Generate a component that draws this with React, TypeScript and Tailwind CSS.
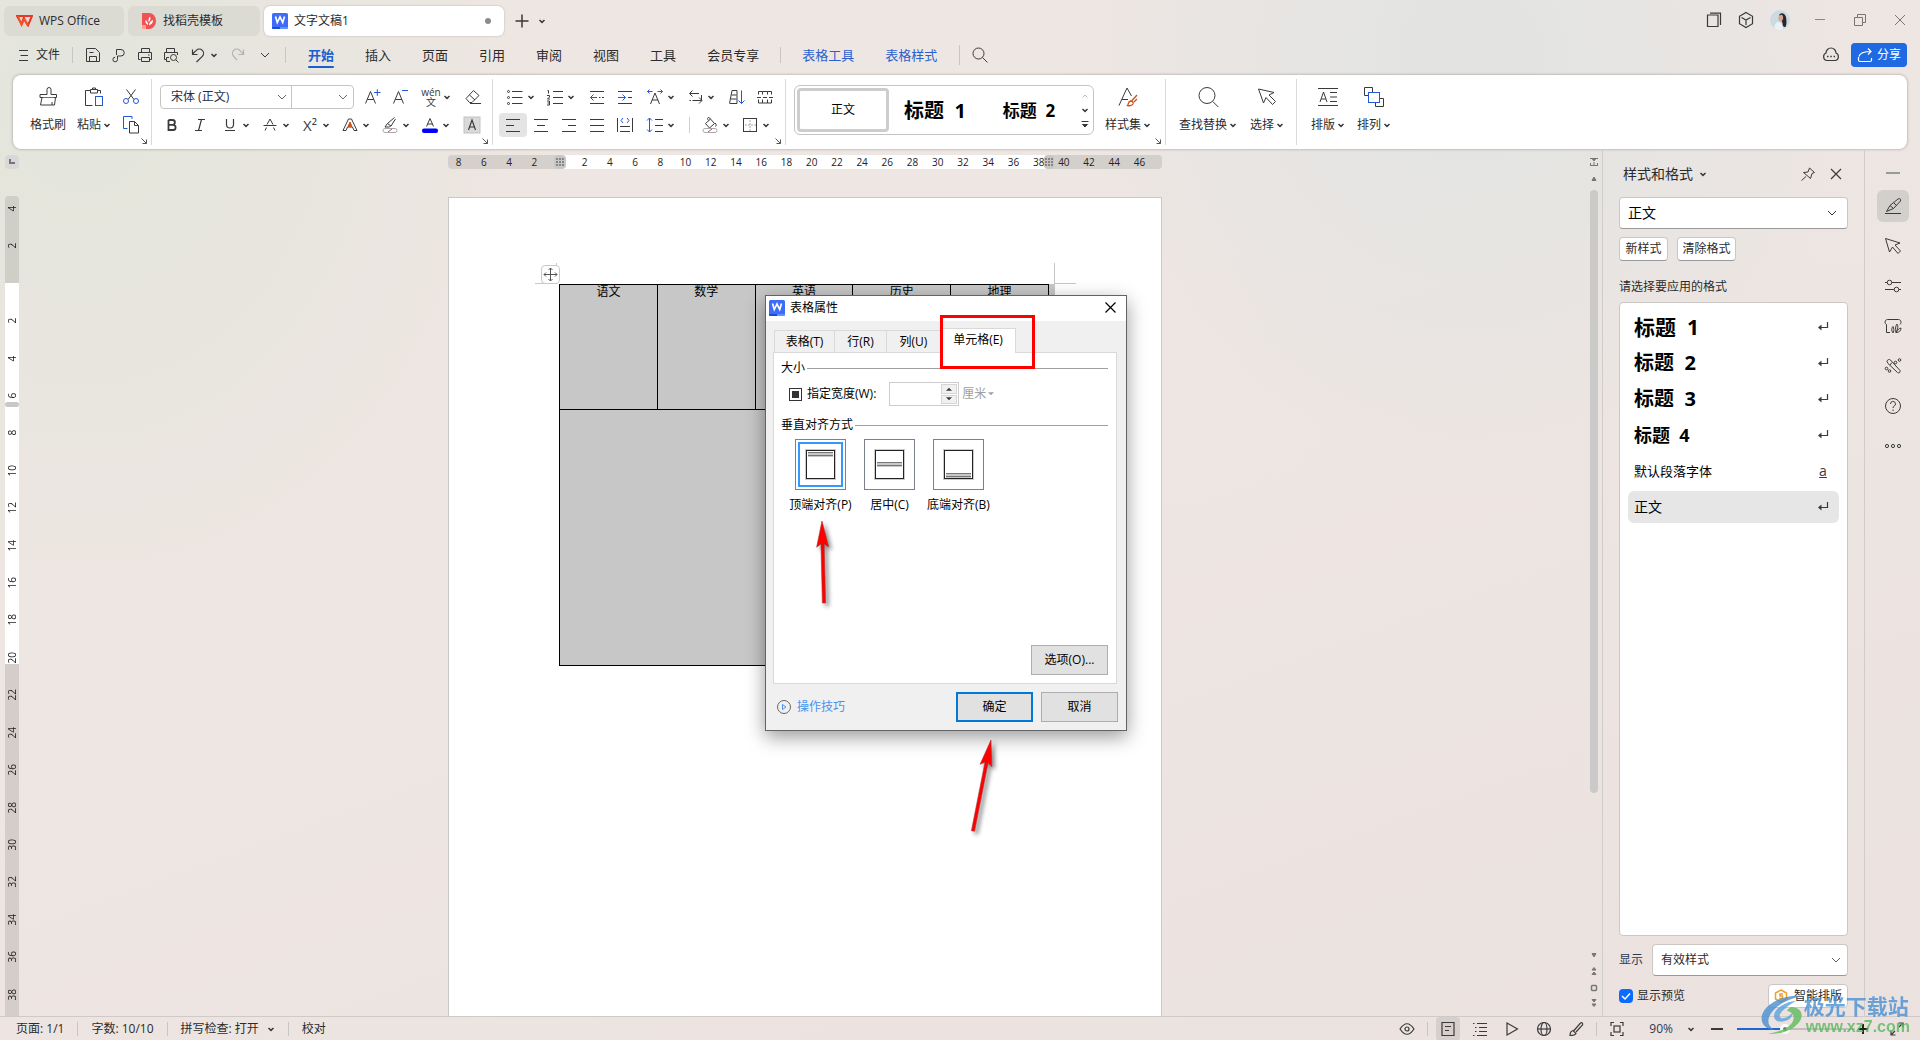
import { useState } from 'react'
import type { ReactNode } from 'react'

interface IconProps {
  w?: number
  h?: number
  sw?: number
  className?: string
  children: ReactNode
}

function Icon({ w = 20, h = 20, sw = 1, className = 'text-[#3a3a3a]', children }: IconProps) {
  return (
    <svg width={w} height={h} viewBox={`0 0 ${w} ${h}`} fill="none" stroke="currentColor" strokeWidth={sw} className={`shrink-0 ${className}`} aria-hidden="true">
      {children}
    </svg>
  )
}

const Chevron = ({ className = 'text-[#3a3a3a]' }: { className?: string }) => (
  <Icon w={8} h={8} sw={1.5} className={className}><path d="M1.5 3l2.5 2.4L6.5 3" /></Icon>
)

const BigChevron = ({ className = 'text-[#666]' }: { className?: string }) => (
  <Icon w={12} h={12} className={className}><path d="M2 4l4 4 4-4" /></Icon>
)

const BLUE = '#2457d6'
const ORANGE = '#c8541e'

const WordLogo = () => (
  <svg width="16" height="16" viewBox="0 0 16 16" className="shrink-0" aria-hidden="true">
    <rect width="16" height="16" rx="1.5" fill="#3d6bfa" />
    <path d="M0 14h8v2H1.5A1.5 1.5 0 0 1 0 14.500z" fill="#1a4bd6" />
    <path d="M8 14h8v.5a1.5 1.5 0 0 1-1.500 1.500H8z" fill="#5f93ff" />
    <path d="M3.5 3.5l1.800 6L8 4l2.700 5.500 1.800-6" fill="none" stroke="#fff" strokeWidth="1.7" />
  </svg>
)

/* ---------- icons ---------- */

const icons: Record<string, ReactNode> = {
  save: <Icon><path d="M3.5 3.5h9l4 4v9h-13zM6.500 16v-4.500h7V16M6.500 7.500h4" /></Icon>,
  exportPdf: <Icon><path d="M7.500 10V4.500h4.500a3 3 0 0 1 0 6.500H8.500v3.500a2.300 2.300 0 1 1-2.300-2.300" /></Icon>,
  print: <Icon><path d="M6.500 7V3.500h8V7M5.500 14.500h-2v-7h13v7h-2M6.500 12.500h8v4h-8zM13 10h1.500" /></Icon>,
  preview: <Icon><path d="M5.500 7V3.500h8V7M5.500 14.500h-2v-7h13V10M5.500 16.500h3.500M5.500 16.500v-4h2.500" /><circle cx="12.5" cy="12.5" r="3" /><path d="M14.800 14.800l2.700 2.700" /></Icon>,
  undo: <Icon sw={1.2}><path d="M4.500 4.500v5h5M4.500 9l3.800-3.600a4.200 4.200 0 0 1 6 6L8.500 17" /></Icon>,
  redo: <Icon sw={1.2} className="text-[#b5b1ae]"><path d="M15.500 4.500v5h-5M15.500 9l-3.800-3.600a4.200 4.200 0 0 0-6 6L9 15" /></Icon>,
  search: <Icon><circle cx="8.5" cy="8.5" r="5.5" /><path d="M12.500 12.500l5 5" /></Icon>,
  brush: <Icon><path d="M9 7.500V2.500a2 2 0 0 1 4 0v5h5.500v3H2v-3zM4 10.500L2.500 18h14l1-7.500M14 15v3" /><path d="M5 10.500h11" stroke={ORANGE} /></Icon>,
  paste: <Icon w={22}><path d="M7.500 3.500h-5v15h7M14.500 3.500h3v3M7.500 2.500h7v3.500h-7zM9.500 2.500v-1.500h3v1.500" /><rect x="12.5" y="9.5" width="7" height="9" stroke={BLUE} /></Icon>,
  cut: <Icon><path d="M5.500 2.500l7.500 10M14.500 2.500l-7.500 10" /><circle cx="5" cy="14" r="2.5" stroke={BLUE} /><circle cx="15" cy="14" r="2.5" stroke={BLUE} /></Icon>,
  copy: <Icon><path d="M6.500 13.500h-4v-12h8.500V4" stroke={BLUE} /><path d="M8.500 6.500h5l4 4v7.500h-9zM13.500 6.500v4h4" /></Icon>,
  grow: <Icon><path d="M2.500 16.500L7.500 4.500l5 12M4.300 12.500h6.500" /><path d="M11 5.500h6.500M14.300 2.300v6.500" stroke={BLUE} /></Icon>,
  shrink: <Icon><path d="M2.500 16.500L7.500 4.500l5 12M4.300 12.500h6.500" /><path d="M11 3.500h6" stroke={BLUE} /></Icon>,
  eraser: <Icon><path d="M3 11.500L10.500 3.500l5.500 5-7 7H6.500zM6.500 8l5.500 5M7 16.500h11" /></Icon>,
  bold: <Icon sw={1.8}><path d="M6.500 5v10h4.500a2.600 2.600 0 0 0 0-5.200H6.500M6.500 5H10.500a2.400 2.400 0 0 1 0 4.800" /></Icon>,
  italic: <Icon sw={1.2}><path d="M8 4.500h7M5 15.500h7M11.500 4.500l-3 11" /></Icon>,
  underline: <Icon sw={1.2}><path d="M6.500 4v5.500a3.500 3.500 0 0 0 7 0V4M5 15.500h10" /></Icon>,
  strike: <Icon><path d="M3.500 10.500h13M7 9.500l3-5.500 3 5.500M5 15.500l1.500-3M15 15.500l-1.500-3" /></Icon>,
  textFx: <Icon><path d="M3 15.500L8.500 4h3L17 15.500h-3L12.500 12h-5L6 15.500z" /><path d="M10 7l-2 4.500h4z" stroke={ORANGE} fill={ORANGE} /></Icon>,
  highlight: <Icon><path d="M15.500 4l-4.500 7-3.500-2.500 7-6M7.500 8.500L5 12h4.500L11 10.500" /><rect x="3" y="13.5" width="14" height="4" rx="2" stroke="#aaa" /><path d="M8 17l4-3" stroke="#e04444" /></Icon>,
  fontColor: <Icon><path d="M6.500 11.500L10 3.500l3.500 8M7.500 9h5" /><rect x="2" y="13.5" width="16" height="4.5" rx="2" fill="#0000fe" stroke="none" /></Icon>,
  shade: <Icon sw={1.2}><rect x="2" y="2" width="16" height="16" fill="#d9d9d9" stroke="#c4c4c4" strokeWidth="1" /><path d="M6.500 15L10 5l3.500 10M7.700 12h4.600" /></Icon>,
  bullets: <Icon><path d="M7 4.500h10.500M7 10.500h10.500M7 16.500h10.500" /><circle cx="3.5" cy="4.5" r="1" /><circle cx="3.5" cy="10.5" r="1" /><circle cx="3.5" cy="16.5" r="1" /></Icon>,
  numbers: <Icon><path d="M8 4.500h10M8 10.500h10M8 16.500h10M2.500 3.500h1v3M2 8.500h2.500v1.500L2.500 12H5M2 14h2.500v4H2M2.500 16H4.500" /></Icon>,
  outdent: <Icon><path d="M3 4.500h14M3 16.500h14M12 10.500h1.500M15 10.500h2" /><path d="M10 10.500H3.500M6.500 7.500l-3 3 3 3" stroke={BLUE} /></Icon>,
  indent: <Icon><path d="M3 4.500h14M3 16.500h14M13 10.500h4" /><path d="M3 10.500h7M7.500 7.500l3 3-3 3" stroke={BLUE} /></Icon>,
  charScale: <Icon><path d="M5.500 17l4.500-11 4.500 11M7 13h6" /><path d="M2.500 4.500h5M4.500 2.500l-2 2 2 2M12.500 4.500h5M15.500 2.500l2 2-2 2" stroke={BLUE} /></Icon>,
  wrap: <Icon><path d="M7.500 3.500l-3 3 3 3M5 6.500h9M16.500 8v5.500H7.500M14 10.500l3 3-3 3M4.500 13.500H6" /></Icon>,
  sort: <Icon><path d="M3 16.500h7M5 3.500h5v13M5 3.500l-2.500 13M4.500 8h5M4 12h5.500" /><path d="M14.500 3.500v13M11.500 13.500l3 3 3-3" stroke={BLUE} /></Icon>,
  grid: <Icon><path d="M3.500 7.500v-3h4v3M12.500 7.500v-3h4v3M3.500 12.500v3.500h4v-3.500M12.500 12.500v3.500h4v-3.500M7.500 4.500h5M7.500 16h5M2 10.500h4M8 10.500h4M14 10.500h4" /></Icon>,
  left: <Icon><path d="M3 4.500h14M3 10.500h8M3 16.500h14" /></Icon>,
  center: <Icon><path d="M3 4.500h14M6 10.500h8M3 16.500h14" /></Icon>,
  right: <Icon><path d="M3 4.500h14M9 10.500h8M3 16.500h14" /></Icon>,
  justify: <Icon><path d="M3 4.500h14M3 10.500h14M3 16.500h14" /></Icon>,
  distribute: <Icon><path d="M2.500 3v14M17.500 3v14M5 11.500h10M5 16.500h10" /><path d="M8 3l-2 2.500L8 8M12 3l2 2.500L12 8" stroke={BLUE} /></Icon>,
  spacing: <Icon><path d="M10 4.500h8M10 10.500h8M10 16.500h8" /><path d="M4.500 3v14M2 5.500l2.500-2.500L7 5.500M2 14.500L4.500 17 7 14.500" stroke={BLUE} /></Icon>,
  bucket: <Icon><path d="M5.500 8.500L10.500 4l4 4.500-5 4.500zM10.500 4c-2-3-4-1-2 1.500M15 8c1.500 1.500 1.500 3 .5 3.500" /><rect x="3" y="13.5" width="14" height="4" rx="2" stroke="#aaa" /><path d="M8 17l4-3" stroke="#e04444" /></Icon>,
  border: <Icon><rect x="3.5" y="3.5" width="13" height="13" /><path d="M10 5v11M5 10h11" stroke="#aaa" strokeDasharray="2 1" /></Icon>,
  styleSet: <Icon w={22} h={22}><path d="M2 19.500L10 2l4.500 8M5 13.500h6" /><path d="M20 9l-5 5.500M20 13l-3 3M10.500 19.500c1-1 .5-4 3-4.500 2.500 0 3 2 2.500 3-1 1.500-3.500 2-5.500 1.500z" stroke={ORANGE} strokeWidth="1.3" /></Icon>,
  find: <Icon w={24} h={24}><circle cx="11" cy="10.5" r="8" /><path d="M16.800 16.500l5.500 5.500" /></Icon>,
  pointer: <Icon w={22} h={22}><path d="M2.500 3l5 14 2.500-5.500 6.500 7 3-3-6.500-6.500 5-2.500z" /></Icon>,
  layout: <Icon w={22}><path d="M1 1.500h20M1 18.500h20M3 15L6.500 5l3.500 10M4.200 12h4.600M13 5.500h7M13 10h7M13 14.500h7" /></Icon>,
  arrange: <Icon w={22} h={22}><path d="M6 9.500H1.500v-8h8V6M16 12.500h4.500v8h-8V17" /><rect x="5.5" y="6.5" width="11" height="10" stroke={BLUE} /></Icon>,
  edit: <Icon><path d="M3.500 15.500l3.500-6 8-6.500c2-1 3 0 2.500 2L10.500 12.500zM7 9.500l3.500 3M10.500 6.500l3 3M2 17.500h16" /></Icon>,
  railPointer: <Icon><path d="M2.500 2.500l4 13.500 3-5 5.500 6.500 2.500-2.500-5.500-6 5-2z" /></Icon>,
  sliders: <Icon><circle cx="6.5" cy="6.5" r="2.3" /><circle cx="13.5" cy="13.5" r="2.3" /><path d="M2 6.500h2.200M8.800 6.500H18M2 13.500h9.200M15.800 13.500H18" /></Icon>,
  gallery: <Icon><path d="M7 16.500H3.500V8.500C1.500 8 1.500 3.500 4.500 3.500h11c3 0 3 4 1.500 5M9.500 16.500c-1.500-3-.5-5 .5-6 1 2 1 4 .5 6zM13 16.500c-1-5 0-7 1-8.500 1.500 2 1 5-1 8.500zM13 16.500c2-3 3-4 5-4.500 0 2.500-1.500 4.500-5 4.500z" /></Icon>,
  tools: <Icon><path d="M4 5.500c0-2 2.500-2.500 3.500-1.500l9.500 10.500c.5 2-1 3-2.500 2L5 7.500zM7 9l2-2.500" /><circle cx="12.5" cy="6.5" r="1.3" /><circle cx="16.5" cy="4" r="1.3" /><circle cx="3.5" cy="12.5" r="1.3" /><circle cx="6.500" cy="15" r="1.3" /></Icon>,
  help: <Icon><circle cx="10" cy="10" r="7.5" /><path d="M7.500 8a2.500 2.500 0 1 1 3.500 2.200c-.7.400-1 .8-1 1.800M10 13.500v1.500" /></Icon>,
  more: <Icon><circle cx="4" cy="10" r="1.6" /><circle cx="10" cy="10" r="1.6" /><circle cx="16" cy="10" r="1.6" /></Icon>,
  eye: <Icon sw={1.2}><path d="M3 10q7-10.500 14 0q-7 10.500-14 0z" /><circle cx="10" cy="10" r="2" /></Icon>,
  pageView: <Icon sw={1.2}><path d="M4 3.500h12v13H4zM7 7.500h6M7 11.500h4" /></Icon>,
  outline: <Icon sw={1.2}><path d="M3 4.500h1.500M7 4.500h10M5 8.500h1.500M9 8.500h8M5 12.500h1.500M9 12.500h8M3 16.500h1.500M7 16.500h10" /></Icon>,
  play: <Icon sw={1.2}><path d="M5 4v12l10.500-6z" /></Icon>,
  globe: <Icon sw={1.2}><circle cx="10" cy="10" r="6.5" /><ellipse cx="10" cy="10" rx="3" ry="6.5" /><path d="M3.500 10h13" /></Icon>,
  pen: <Icon sw={1.2}><path d="M4 16.500c0-3 1-4.500 3-5l3 3c-1 1.800-3 2-6 2zM8 11.500l6.500-7.500c1.500-.8 2.800.5 2 2L10 13" /></Icon>,
  fit: <Icon sw={1.2}><path d="M7 3.500H4V7M13 3.500h3V7M7 16.500H4V13M13 16.500h3V13" /><rect x="7" y="7" width="6" height="6" /></Icon>,
  full: <Icon sw={1.2}><path d="M11.500 4H16v4.500M8.500 16H4v-4.500M16 4l-4 4M4 16l4-4" /></Icon>,
}

/* ---------- small building blocks ---------- */

function Tool({ name, active }: { name: string; active?: boolean }) {
  return (
    <button aria-label={name} className={`flex h-6 w-7 items-center justify-center rounded ${active ? 'bg-[#e4e4e4]' : ''}`}>
      {icons[name]}
    </button>
  )
}

function SplitTool({ label, children }: { label: string; children: ReactNode }) {
  return (
    <button aria-label={label} className="flex h-6 w-10 items-center pr-2">
      <span className="flex w-6 justify-center">{children}</span>
      <Chevron />
    </button>
  )
}

function BigTool({ name, label, arrow, className }: { name: string; label: string; arrow?: boolean; className: string }) {
  return (
    <button className={`flex flex-col items-center ${className}`}>
      <span className="flex h-7 items-center">{icons[name]}</span>
      <span className="flex h-7 items-center gap-0.5 whitespace-nowrap">{label}{arrow && <Chevron />}</span>
    </button>
  )
}

const Launcher = () => (
  <button aria-label="更多设置" className="absolute right-[3px] bottom-0">
    <Icon w={8} h={8} className="text-[#555]"><path d="M1.500 1.500l5 5M2.500 6.500h4v-4" /></Icon>
  </button>
)

const Rule = ({ className }: { className: string }) => <span className={`w-px shrink-0 ${className}`} />

/* ---------- top bars ---------- */

function TitleBar() {
  return (
    <header className="flex h-9 shrink-0 items-end pl-1">
      <button className="flex h-[30px] w-[120px] items-center gap-1.5 rounded-md bg-[#dbdad3] pl-3">
        <svg width="17" height="12" viewBox="0 0 17 12" aria-hidden="true">
          <path d="M1 1h7.500L5.500 9zM8.500 1H16l-4 9.500L8 4" fill="none" stroke="#e8362b" strokeWidth="2" />
          <path d="M2 1l3.500 9 3-6 3.500 6.500" fill="none" stroke="#f5531f" strokeWidth="1.8" />
        </svg>
        WPS Office
      </button>
      <button className="ml-1 flex h-[30px] w-[132px] items-center gap-[7px] rounded-md bg-[#dbdad3] pl-3.5">
        <svg width="14" height="16" viewBox="0 0 14 16" aria-hidden="true">
          <path d="M0 0h7a7 8 0 0 1 0 16H0z" fill="#ee5253" />
          <path d="M0 12h4v4H0z" fill="#ff9a8f" />
          <path d="M6 12c-2-1-3-3-2.500-5C5.500 8 6.200 10 6 12zM6.500 9C6 6.500 7 4.500 8 3.500c1 2 .5 4-1.500 5.500zM7 12c0-2.500 2-4.500 4-5 .2 2.500-1.500 5-4 5z" fill="#fff" />
        </svg>
        找稻壳模板
      </button>
      <div className="ml-1 flex h-[30px] w-60 items-center gap-1.5 rounded-md bg-white pl-2 shadow-[0_0_2px_rgba(0,0,0,0.25)]">
        <WordLogo />
        <span className="flex-1">文字文稿1</span>
        <span className="mr-[13px] size-1.5 rounded-full bg-[#8c8c8c]" />
      </div>
      <button aria-label="新建" className="ml-2 flex h-[30px] w-5 items-center justify-center">
        <Icon w={16} h={16} sw={1.5}><path d="M1.500 8h13M8 1.500v13" /></Icon>
      </button>
      <button aria-label="标签列表" className="ml-1.5 flex h-[30px] items-center"><Chevron /></button>

      <div className="ml-auto flex h-9 items-center pb-1 pt-2">
        <button aria-label="窗口" className="flex w-8 justify-center"><Icon sw={1.2}><path d="M3.500 5h10.500v11.500H3.500zM6 3.200h10.500V15" /></Icon></button>
        <button aria-label="应用" className="flex w-8 justify-center"><Icon sw={1.2}><path d="M10 2.500l6.500 3.800v7.400L10 17.500l-6.500-3.800V6.300zM5.500 7.500L10 10l4.500-2.500M10 10v5" /></Icon></button>
        <button aria-label="账号" className="flex w-9 justify-center">
          <svg width="20" height="20" viewBox="0 0 20 20" aria-hidden="true">
            <circle cx="10" cy="10" r="10" fill="#ccdbe2" />
            <path d="M9 5c2-3 6-2 7 2 .5 3 1 7-.5 10-2 .5-3-1-3-4z" fill="#2c2530" />
            <path d="M8.500 7c1-2.500 4-3 4.500-.5.500 2.500-.5 4.500-2 5-1.800.3-3-2-2.500-4.500z" fill="#d9a58f" />
            <path d="M4.500 18c0-4 1.500-5.500 4-6 2.500.5 4 3 4.500 7.500-3 1-6 .5-8.500-1.500z" fill="#eaf2f5" />
          </svg>
        </button>
        <button aria-label="最小化" className="ml-0.5 flex w-10 justify-center"><Icon w={12} h={12} className="text-[#888]"><path d="M1 5.500h10" /></Icon></button>
        <button aria-label="还原" className="flex w-10 justify-center"><Icon w={14} h={14} className="text-[#777]"><path d="M1.500 4.500h8v8h-8zM4.500 4.500v-3h8v8h-3" /></Icon></button>
        <button aria-label="关闭" className="flex w-10 justify-center"><Icon w={12} h={12} className="text-[#777]"><path d="M1 1l10 10M11 1L1 11" /></Icon></button>
      </div>
    </header>
  )
}

const tabs = ['开始', '插入', '页面', '引用', '审阅', '视图', '工具', '会员专享']

function MenuBar() {
  return (
    <nav className="flex h-[39px] shrink-0 items-center pb-0.5 pl-[19px] pr-[13px]">
      <button className="flex items-center gap-2">
        <Icon w={9} h={12}><path d="M0 1.500h9M1.500 6.500h7.500M0 11.500h9" /></Icon>
        文件
      </button>
      <Rule className="ml-3 mr-[7px] h-4 bg-[#c9c5c2]" />
      {['save', 'exportPdf', 'print', 'preview'].map((n) => (
        <button key={n} aria-label={n} className="flex w-[26px] justify-center">{icons[n]}</button>
      ))}
      <button aria-label="撤销" className="flex w-[41px] items-center gap-0.5 pl-1">{icons.undo}<Chevron /></button>
      <button aria-label="恢复" className="flex w-[26px] justify-center">{icons.redo}</button>
      <button aria-label="更多" className="flex w-7 justify-center"><BigChevron className="text-[#3a3a3a]" /></button>
      <Rule className="ml-1.5 h-4 bg-[#c9c5c2]" />
      <div className="ml-[22px] flex items-center gap-[31px] text-[13px]">
        {tabs.map((t, i) => (
          <a key={t} href="#" className={i === 0 ? 'relative font-bold text-[#1a5fd0]' : ''}>
            {t}
            {i === 0 && <span className="absolute inset-x-0 -bottom-1 h-0.5 rounded bg-[#1a5fd0]" />}
          </a>
        ))}
      </div>
      <Rule className="mx-[21px] h-4 bg-[#c9c5c2]" />
      <div className="flex gap-[31px] text-[13px] text-[#2a5fcd]">
        <a href="#">表格工具</a>
        <a href="#">表格样式</a>
      </div>
      <Rule className="ml-[22px] mr-2.5 h-5 bg-[#c9c5c2]" />
      <button aria-label="搜索">{icons.search}</button>
      <button aria-label="云" className="ml-auto mr-2.5">
        <Icon sw={1.2}><path d="M5.500 15.500a4 4 0 0 1-.5-7.500 5 5 0 0 1 10 0 4 4 0 0 1-.5 7.500z" /><path d="M6 11.500h1.500M9.300 11.500h1.500M12.600 11.500h1.500" strokeWidth="1.6" /></Icon>
      </button>
      <button className="flex h-6 w-14 items-center justify-center gap-1 rounded bg-[#1f6ae3] text-white">
        <Icon w={16} h={16} sw={1.2} className="text-white"><path d="M1.500 10v3a1.500 1.500 0 0 0 1.500 1.500h10a1.500 1.500 0 0 0 1.500-1.500v-2M2 9.500c1-4 5-5 12-5M11 1.500l3 3-3 3" /></Icon>
        分享
      </button>
    </nav>
  )
}

function Ribbon() {
  return (
    <section className="mx-[13px] flex h-[74px] shrink-0 rounded-lg bg-white py-1 shadow-[0_0_3px_rgba(0,0,0,0.35)]">
      <div className="relative flex w-[138px] pl-[13px] pt-1">
        <BigTool name="brush" label="格式刷" className="w-11" />
        <BigTool name="paste" label="粘贴" arrow className="ml-1 w-10" />
        <div className="ml-[3px] flex flex-col gap-1 pt-0.5"><Tool name="cut" /><Tool name="copy" /></div>
        <Launcher />
      </div>
      <Rule className="bg-[#d9d9d9]" />

      <div className="relative w-[340px] pt-1">
        <div className="flex h-7 items-center pl-2">
          <div className="relative flex h-6 w-[194px] items-center rounded border border-[#c4c4c4]">
            <select aria-label="字体" className="h-full w-[131px] appearance-none border-r border-[#c4c4c4] pl-2.5 text-[#22304a]"><option>宋体 (正文)</option></select>
            <select aria-label="字号" className="h-full flex-1 appearance-none"><option></option></select>
            <span className="pointer-events-none absolute left-[115px]"><BigChevron /></span>
            <span className="pointer-events-none absolute right-1"><BigChevron /></span>
          </div>
          <div className="ml-[5px] flex"><Tool name="grow" /><Tool name="shrink" /></div>
          <div className="ml-1 flex">
            <SplitTool label="拼音指南"><span className="flex flex-col items-center text-[10px]/[10px] text-[#3a3a3a]"><span>wén</span><span>文</span></span></SplitTool>
            <Tool name="eraser" />
          </div>
        </div>
        <div className="flex h-7 items-center pl-1.5">
          <Tool name="bold" />
          <Tool name="italic" />
          <div className="ml-1 flex">
            <SplitTool label="下划线">{icons.underline}</SplitTool>
            <SplitTool label="删除线">{icons.strike}</SplitTool>
            <SplitTool label="上标"><span className="text-[15px]/[20px] text-[#3a3a3a]">X²</span></SplitTool>
            <SplitTool label="文字效果">{icons.textFx}</SplitTool>
            <SplitTool label="突出显示">{icons.highlight}</SplitTool>
            <SplitTool label="字体颜色">{icons.fontColor}</SplitTool>
            <Tool name="shade" />
          </div>
        </div>
        <Launcher />
      </div>
      <Rule className="bg-[#d9d9d9]" />

      <div className="relative w-[292px] pt-1">
        <div className="flex h-7 items-center pl-2.5">
          <SplitTool label="项目符号">{icons.bullets}</SplitTool>
          <SplitTool label="编号">{icons.numbers}</SplitTool>
          <Tool name="outdent" />
          <Tool name="indent" />
          <div className="ml-1 flex">
            <SplitTool label="字符缩放">{icons.charScale}</SplitTool>
            <SplitTool label="换行">{icons.wrap}</SplitTool>
            <Tool name="sort" />
            <Tool name="grid" />
          </div>
        </div>
        <div className="flex h-7 items-center pl-1.5">
          <Tool name="left" active />
          <Tool name="center" />
          <Tool name="right" />
          <Tool name="justify" />
          <Tool name="distribute" />
          <div className="ml-1 flex items-center">
            <SplitTool label="行距">{icons.spacing}</SplitTool>
            <Rule className="ml-1.5 mr-2 h-4 bg-[#d0d0d0]" />
            <SplitTool label="底纹">{icons.bucket}</SplitTool>
            <SplitTool label="边框">{icons.border}</SplitTool>
          </div>
        </div>
        <Launcher />
      </div>
      <Rule className="bg-[#d9d9d9]" />

      <div className="relative flex w-[379px] pl-2">
        <div className="mt-1.5 flex h-[50px] w-[300px] rounded-md border border-[#c4c4c4] p-0.5 text-black">
          <button className="w-[92px] rounded border-[3px] border-[#cdcdcd]">正文</button>
          <button className="w-[92px] pt-0.5 text-[20px]/[24px] font-bold whitespace-pre">标题  1</button>
          <button className="w-24 pt-0.5 text-[17px]/[24px] font-bold whitespace-pre">标题  2</button>
          <div className="ml-auto flex w-3 flex-col items-center justify-between py-1">
            <button aria-label="上一行"><Icon w={8} h={8} className="text-[#bbb]"><path d="M1.500 5.500L4 3l2.500 2.500" /></Icon></button>
            <button aria-label="下一行"><Chevron /></button>
            <button aria-label="展开"><Icon w={8} h={8}><path d="M0.500 1.500h7M1.500 4.500L4 7l2.500-2.500z" fill="currentColor" /></Icon></button>
          </div>
        </div>
        <div className="ml-2.5 pt-1"><BigTool name="styleSet" label="样式集" arrow className="w-12" /></div>
        <Launcher />
      </div>
      <Rule className="bg-[#d9d9d9]" />

      <div className="flex w-[130px] gap-2 pl-[11px] pt-1">
        <BigTool name="find" label="查找替换" arrow className="w-[62px]" />
        <BigTool name="pointer" label="选择" arrow className="w-10" />
      </div>
      <Rule className="bg-[#d9d9d9]" />
      <div className="flex gap-1.5 pl-[11px] pt-1">
        <BigTool name="layout" label="排版" arrow className="w-10" />
        <BigTool name="arrange" label="排列" arrow className="w-10" />
      </div>
    </section>
  )
}

/* ---------- document ---------- */

const hMarks = [8, 6, 4, 2, 0, ...Array.from({ length: 23 }, (_, i) => (i + 1) * 2)]
const vMarks = [4, 2, 0, ...Array.from({ length: 19 }, (_, i) => (i + 1) * 2)]

const RulerGrip = ({ className }: { className: string }) => (
  <span className={`absolute inset-y-0 flex items-center justify-center rounded bg-[#c9c7c6] ${className}`}>
    <Icon w={8} h={8} sw={2} className="text-[#858585]"><path d="M0 1h8M0 4h8M0 7h8" strokeDasharray="2 1" /></Icon>
  </span>
)

function HRuler() {
  return (
    <div className="relative mt-1.5 h-3.5 w-[714px] shrink-0 rounded bg-[linear-gradient(90deg,#d6d0cd_112px,#fff_112px,#fff_602px,#d3cfcb_602px)] text-[10px]/[14px] text-[#222]">
      <div className="-ml-0.5 mr-2.5 flex">
        {hMarks.map((n, i) => (
          <span key={i} className="flex-1 text-center">{n === 0 ? '' : n}</span>
        ))}
      </div>
      <RulerGrip className="left-[106px] w-3" />
      <RulerGrip className="left-[596px] w-2.5" />
    </div>
  )
}

function VRuler() {
  return (
    <aside className="flex w-6 shrink-0 flex-col pl-[5px] pt-1.5">
      <span className="flex size-3.5 shrink-0 items-center justify-center rounded bg-[#d8d8d8]">
        <Icon w={6} h={6} sw={2} className="text-[#777]"><path d="M1 0v4h5" /></Icon>
      </span>
      <div className="relative mt-[27px] w-3.5 flex-1 overflow-hidden rounded-t bg-[linear-gradient(#cfcfc8_87px,#fff_87px,#fff_468px,#d5cdca_468px)] text-[10px]/[14px] text-[#222]">
        <div className="-mt-1.5 flex h-[823px] flex-col">
          {vMarks.map((n, i) => (
            <span key={i} className="flex flex-1 rotate-180 items-center justify-center [writing-mode:vertical-rl]">{n === 0 ? '' : n}</span>
          ))}
        </div>
        <span className="absolute inset-x-0 top-[206px] h-[5px] rounded-full bg-[#c9c7c8]" />
      </div>
    </aside>
  )
}

const subjects = ['语文', '数学', '英语', '历史', '地理']

function Arrow({ tip, tail }: { tip: [number, number]; tail: [number, number] }) {
  const dx = tip[0] - tail[0]
  const dy = tip[1] - tail[1]
  const len = Math.hypot(dx, dy)
  const ux = dx / len
  const uy = dy / len
  // point at distance d behind the tip, s to the side
  const p = (d: number, s: number) => `${tip[0] - ux * d - uy * s},${tip[1] - uy * d + ux * s}`
  return <polygon points={[p(0, 0), p(26, 6), p(23, 1.6), p(len, 1.6), p(len, -1.6), p(23, -1.6), p(26, -6)].join(' ')} fill="#fe0000" stroke="#a33" strokeWidth="0.6" />
}

function Page() {
  return (
    <article className="relative mt-7 w-[714px] flex-1 border border-b-0 border-[#cbc9c7] bg-white pl-[110px] pt-[86px]">
      {/* margin corner marks */}
      <span className="absolute left-[86px] top-[65px] h-[21px] w-[22px] border-r border-b border-[#c8c8c8]" />
      <span className="absolute left-[605px] top-[65px] h-[21px] w-[22px] border-b border-l border-[#c8c8c8]" />
      <button aria-label="移动表格" className="absolute left-[92px] top-[67px] rounded-sm border border-[#c8c8c8] bg-white">
        <Icon w={17} h={17} className="text-[#555]"><path d="M8.500 2v13M2 8.500h13M6.500 4l2-2 2 2M6.500 13l2 2 2-2M4 6.500l-2 2 2 2M13 6.500l2 2-2 2" /></Icon>
      </button>
      <table className="w-[490px] table-fixed border-collapse bg-[#c7c7c7] text-[12px]/[14px] text-black shadow-[6px_0_0_#c7c7c7]">
        <tbody>
          <tr className="h-[125px]">
            {subjects.map((s) => <td key={s} className="border border-black p-0 text-center align-top">{s}</td>)}
          </tr>
          <tr className="h-[256px]"><td colSpan={5} className="border border-black" /></tr>
        </tbody>
      </table>

      <TableProperties />

      <span className="pointer-events-none absolute left-[491px] top-[117px] h-[54px] w-[95px] border-[3px] border-[#fe0000]" />
      <svg width="714" height="700" className="pointer-events-none absolute left-0 top-0 [filter:drop-shadow(3px_3px_2px_rgba(0,0,0,0.45))]" aria-hidden="true">
        <Arrow tip={[373, 323]} tail={[375, 405]} />
        <Arrow tip={[542, 542]} tail={[524, 633]} />
      </svg>
    </article>
  )
}

const dialogTabs = [
  { label: '表格(T)', className: 'w-[61px] border-l' },
  { label: '行(R)', className: 'w-[52px]' },
  { label: '列(U)', className: 'w-[54px]' },
]

const aligns = [
  { id: 'top', label: '顶端对齐(P)', y: 5 },
  { id: 'middle', label: '居中(C)', y: 15 },
  { id: 'bottom', label: '底端对齐(B)', y: 26 },
]

function Legend({ children }: { children: ReactNode }) {
  return (
    <div className="flex h-[18px] items-center gap-0.5">
      {children}
      <span className="h-px flex-1 bg-[#a0a0a0]" />
    </div>
  )
}

function TableProperties() {
  const [align, setAlign] = useState('top')
  return (
    <div role="dialog" aria-label="表格属性" className="absolute left-[316px] top-[97px] w-[362px] border border-[#636363] bg-[#f0f0f0] text-black shadow-[0_6px_18px_rgba(0,0,0,0.4)]">
      <div className="flex h-[25px] items-center gap-[5px] bg-white pl-[3px] pr-2.5 pb-0.5">
        <WordLogo />
        <h2 className="flex-1">表格属性</h2>
        <button aria-label="关闭"><Icon w={11} h={11} sw={1.2} className="text-black"><path d="M0.500 0.500l10 10M10.500 0.500l-10 10" /></Icon></button>
      </div>

      <div className="px-[7px] pt-[7px] pb-2">
        <div role="tablist" className="relative -mb-px flex h-[25px] items-end pl-px">
          {dialogTabs.map((t) => (
            <button key={t.label} role="tab" className={`h-[23px] border-t border-r border-[#d9d9d9] ${t.className}`}>{t.label}</button>
          ))}
          <button role="tab" aria-selected="true" className="h-[25px] w-[75px] border-t border-r border-[#d9d9d9] bg-white pb-0.5">单元格(E)</button>
        </div>
        <div className="flex h-[332px] w-[344px] flex-col border border-[#d9d9d9] bg-white pt-1.5 pr-2 pb-2 pl-[7px]">
          <Legend>大小</Legend>
          <div className="mt-[5px] flex h-6 items-center pl-2">
            <label className="flex items-center gap-[5px]">
              <input type="checkbox" className="size-[13px] appearance-none border border-[#333] bg-[#333] shadow-[inset_0_0_0_2px_#fff]" />
              指定宽度(W):
            </label>
            <div className="ml-[13px] flex h-6 w-[70px] border border-[#ccc] bg-white p-px">
              <input aria-label="宽度" className="w-0 flex-1" />
              <span className="flex w-4 flex-col gap-px">
                <button aria-label="增加" className="flex flex-1 items-center justify-center border border-[#d5d5d5] bg-[#f0f0f0]"><Icon w={6} h={4} sw={0.5}><path d="M0.500 3.500h5L3 1z" fill="currentColor" /></Icon></button>
                <button aria-label="减少" className="flex flex-1 items-center justify-center border border-[#d5d5d5] bg-[#f0f0f0]"><Icon w={6} h={4} sw={0.5}><path d="M0.500 0.500h5L3 3z" fill="currentColor" /></Icon></button>
              </span>
            </div>
            <button disabled className="ml-[3px] flex items-center gap-0.5 text-[#a0a0a0]">
              厘米
              <Icon w={6} h={4} sw={0.5} className="text-[#a0a0a0]"><path d="M0.500 0.500h5L3 3z" fill="currentColor" /></Icon>
            </button>
          </div>
          <div className="mt-2.5"><Legend>垂直对齐方式</Legend></div>
          <div className="mt-[5px] flex pl-[5px]">
            {aligns.map((a) => (
              <label key={a.id} className="flex w-[69px] flex-col items-center gap-1.5 whitespace-nowrap">
                <input type="radio" name="valign" className="sr-only" checked={align === a.id} onChange={() => setAlign(a.id)} />
                <span className="flex size-[51px] items-center justify-center border border-[#7a808c] bg-white p-0.5">
                  <span className={`flex size-[45px] items-center justify-center border-2 ${align === a.id ? 'border-[#3399ff]' : 'border-white'}`}>
                    <Icon w={31} h={31} className="text-[#222]">
                      <rect x="0.5" y="0.5" width="30" height="30" stroke="#ccc" />
                      <rect x="1.5" y="1.5" width="28" height="28" />
                      <rect x="3" y={a.y - 2} width="25" height="5" fill="#c8c8c8" stroke="none" />
                      <path d={`M3 ${a.y - 1.5}h25M3 ${a.y + 1.5}h25`} stroke="#777" />
                    </Icon>
                  </span>
                </span>
                <span className="h-[18px]">{a.label}</span>
              </label>
            ))}
          </div>
          <button className="mt-auto h-[30px] w-[77px] self-end border border-[#adadad] bg-[#e1e1e1]">选项(O)...</button>
        </div>
        <div className="mt-2 flex items-center gap-2 pl-1 pr-px">
          <a href="#" className="mr-auto flex items-center gap-1.5 text-[#4a90f0]">
            <Icon w={14} h={14}><circle cx="7" cy="7" r="6.5" stroke="#666" /><path d="M5.500 4.500v5l3.500-2.500z" stroke="#4a90f0" /></Icon>
            操作技巧
          </a>
          <button className="h-[30px] w-[77px] border-2 border-[#0078d7] bg-[#e1e1e1]">确定</button>
          <button className="h-[30px] w-[77px] border border-[#adadad] bg-[#e1e1e1]">取消</button>
        </div>
      </div>
    </div>
  )
}

function ScrollBar() {
  return (
    <div className="flex w-4 shrink-0 flex-col items-center pt-[9px] pb-2">
      <Icon w={8} h={8} className="text-[#777]"><path d="M0 0.500h8M0 7.500h8M0.500 5v2M7.500 5v2M4 4v3" /><path d="M2.500 1h3L4 3z" fill="currentColor" /></Icon>
      <Icon w={8} h={6} className="mt-2.5 text-[#777]"><path d="M2 4.500h4L4 1z" fill="currentColor" /></Icon>
      <span className="mt-2 h-[603px] w-2 rounded bg-[#cccac8]" />
      <Icon w={8} h={6} className="mt-auto text-[#777]"><path d="M2 1.500h4L4 5z" fill="currentColor" /></Icon>
      <Icon w={8} h={10} className="mt-2 text-[#777]"><path d="M2 4h4L4 1.500zM2 8.500h4L4 6z" fill="currentColor" /></Icon>
      <Icon w={8} h={8} sw={1.5} className="mt-2 text-[#777]"><rect x="1.5" y="1.5" width="5" height="5" rx="1" /></Icon>
      <Icon w={8} h={10} className="mt-1.5 text-[#777]"><path d="M2 1.500h4L4 4zM2 6h4L4 8.500z" fill="currentColor" /></Icon>
    </div>
  )
}

/* ---------- styles pane ---------- */

const styles = [
  { name: '标题  1', className: 'text-[21px]' },
  { name: '标题  2', className: 'text-[20px]' },
  { name: '标题  3', className: 'text-[20px]' },
  { name: '标题  4', className: 'text-[18px]' },
]

const ReturnMark = () => (
  <Icon w={12} h={12} sw={1.2}><path d="M10.500 1v5.500H3" /><path d="M1 6.500L4.500 3.500v6z" fill="currentColor" stroke="none" /></Icon>
)

function StylesPane() {
  return (
    <aside className="flex w-[262px] shrink-0 flex-col border-l border-[#d0cccb] px-4 pt-3 pb-2">
      <div className="flex h-[26px] items-center pl-1 pr-1.5 text-sm">
        <h2 className="mr-1.5">样式和格式</h2>
        <Chevron />
        <button aria-label="固定" className="ml-auto"><Icon w={16} h={16}><path d="M9.500 2l5 4.500-2.500 1-1.500 5-7-6 4.500-.5zM6 10.500L1.500 14.500" /></Icon></button>
        <button aria-label="关闭" className="ml-3.5"><Icon w={12} h={12} sw={1.2}><path d="M1 1l10 10M11 1L1 11" /></Icon></button>
      </div>
      <div className="relative mt-2.5 flex items-center">
        <select aria-label="当前样式" className="h-8 w-full appearance-none rounded border border-[#cbc7c5] border-b-[#999] bg-white pl-2 text-sm text-black"><option>正文</option></select>
        <span className="pointer-events-none absolute right-2.5"><BigChevron className="text-[#333]" /></span>
      </div>
      <div className="mt-2 flex gap-[9px]">
        <button className="h-6 w-[49px] rounded border border-[#cbc7c5] border-b-[#999] bg-white">新样式</button>
        <button className="h-6 w-[59px] rounded border border-[#cbc7c5] border-b-[#999] bg-white">清除格式</button>
      </div>
      <p className="mt-[17px] h-[18px]">请选择要应用的格式</p>
      <ul className="mt-1.5 flex flex-1 flex-col gap-1 rounded border border-[#cbc7c5] bg-white p-2 text-black">
        {styles.map((s) => (
          <li key={s.name}>
            <button className="flex h-8 w-full items-center justify-between pl-[6px] pr-2.5">
              <span className={`font-bold whitespace-pre ${s.className}`}>{s.name}</span>
              <ReturnMark />
            </button>
          </li>
        ))}
        <li>
          <button className="flex h-8 w-full items-center justify-between pl-[6px] pr-2.5">
            <span className="text-[13px]">默认段落字体</span>
            <span className="w-3 text-center text-sm text-[#3a3a3a] underline">a</span>
          </button>
        </li>
        <li>
          <button className="flex h-8 w-full items-center justify-between rounded-md bg-[#e6e6e6] pl-[6px] pr-2.5">
            <span className="text-sm">正文</span>
            <ReturnMark />
          </button>
        </li>
      </ul>
      <div className="mt-2 flex items-center">
        <label htmlFor="show" className="w-[33px] text-[#2d3a52]">显示</label>
        <div className="relative flex flex-1 items-center">
          <select id="show" className="h-8 w-full appearance-none rounded border border-[#cbc7c5] border-b-[#999] bg-white pl-2"><option>有效样式</option></select>
          <span className="pointer-events-none absolute right-1.5"><BigChevron /></span>
        </div>
      </div>
      <div className="mt-2 flex items-center justify-between">
        <label className="relative flex items-center gap-1">
          <input type="checkbox" defaultChecked className="size-3.5 appearance-none rounded-sm bg-[#0a6cff]" />
          <Icon w={14} h={14} sw={1.5} className="pointer-events-none absolute left-0 text-white"><path d="M3 7l3 3 5-5.500" /></Icon>
          显示预览
        </label>
        <button className="flex h-6 items-center gap-1.5 rounded border border-[#cbc7c5] bg-white px-[5px]">
          <Icon w={14} h={14} sw={1.5} className="text-[#f0a030]"><path d="M7 1l5.500 3v6L7 13l-5.500-3V4zM9 5H6v2h2.500v2.500H5" /></Icon>
          智能排版
        </button>
      </div>
    </aside>
  )
}

function SideRail() {
  return (
    <aside className="flex w-14 shrink-0 flex-col items-center gap-2 border-l border-[#d0cccb] pt-[9px]">
      <button aria-label="收起" className="flex h-6 w-8 items-center justify-center pt-1.5"><Icon w={14} h={6} sw={2} className="text-[#999]"><path d="M0 3h14" /></Icon></button>
      {['edit', 'railPointer', 'sliders', 'gallery', 'tools', 'help', 'more'].map((n, i) => (
        <button key={n} aria-label={n} className={`flex size-8 items-center justify-center rounded-md ${i === 0 ? 'bg-[#d2cfcc]' : ''}`}>{icons[n]}</button>
      ))}
    </aside>
  )
}

/* ---------- status bar ---------- */

function StatusBar() {
  const [zoom, setZoom] = useState(40)

  return (
    <footer className="flex h-6 shrink-0 items-center border-t border-[#cfc9c7] pl-4 pr-[13px]">
      <span>页面: 1/1</span>
      <Rule className="mx-[13px] h-3.5 bg-[#c9c5c2]" />
      <span>字数: 10/10</span>
      <Rule className="mx-[13px] h-3.5 bg-[#c9c5c2]" />
      <button className="flex items-center gap-2">拼写检查: 打开<Chevron /></button>
      <Rule className="mx-[13px] h-3.5 bg-[#c9c5c2]" />
      <button>校对</button>

      <div className="ml-auto flex items-center">
        <button aria-label="护眼模式">{icons.eye}</button>
        <Rule className="ml-2.5 mr-2 h-3.5 bg-[#c9c5c2]" />
        <button aria-label="页面视图" className="flex h-6 w-6 items-center justify-center rounded bg-[#d6cfcd]">{icons.pageView}</button>
        <button aria-label="大纲" className="ml-2.5">{icons.outline}</button>
        <button aria-label="阅读" className="ml-3">{icons.play}</button>
        <button aria-label="Web 版式" className="ml-3">{icons.globe}</button>
        <button aria-label="写作模式" className="ml-3">{icons.pen}</button>
        <Rule className="mx-2.5 h-3.5 bg-[#c9c5c2]" />
        <button aria-label="适合页面">{icons.fit}</button>
        <button className="ml-[22px] flex items-center gap-3.5 text-[#2d3a52]">90%<Chevron /></button>
        <button aria-label="缩小" className="ml-4"><Icon w={12} h={12} sw={2}><path d="M0 6h12" /></Icon></button>
        <input
          type="range"
          aria-label="缩放"
          value={zoom}
          onChange={(e) => setZoom(Number(e.target.value))}
          className="ml-3.5 h-0.5 w-[118px] appearance-none bg-[linear-gradient(90deg,#1f66d0_40%,#c2bebc_40%)] [&::-webkit-slider-thumb]:size-2.5 [&::-webkit-slider-thumb]:appearance-none [&::-webkit-slider-thumb]:rounded-full [&::-webkit-slider-thumb]:border-[3px] [&::-webkit-slider-thumb]:border-white [&::-webkit-slider-thumb]:bg-[#777]"
        />
        <button aria-label="放大" className="ml-0.5"><Icon w={12} h={12} sw={2} className="text-[#222]"><path d="M1 6h10M6 1v10" /></Icon></button>
        <button aria-label="全屏" className="ml-[18px]">{icons.full}</button>
      </div>
    </footer>
  )
}

function Watermark() {
  return (
    <div className="pointer-events-none absolute right-2.5 bottom-1 flex items-center opacity-80">
      <svg width="44" height="42" viewBox="0 0 44 42" aria-hidden="true">
        <path d="M43 2C26 0 6 8 2 21c-2 8 3 14 12 15C8 32 7 27 10 21 15 12 27 5 43 2z" fill="#4a8fd0" />
        <path d="M36 7c-12 1-22 8-22 15 0 5 6 7 11 5 5-1 8-5 8-9-3 4-8 7-12 6-4-2 1-9 15-17z" fill="#5ba2dc" />
        <path d="M32 13c9 1 12 7 8 14-6 9-17 13-32 13 11-2 22-6 25-13 2-6-1-9-6-10 1-2 3-4 5-4z" fill="#5fbb5c" />
      </svg>
      <div className="flex flex-col">
        <span className="text-[21px]/[24px] font-bold text-[#4a90d2]">极光下载站</span>
        <span className="pl-0.5 font-['Liberation_Sans',sans-serif] text-[16px]/[18px] font-bold text-[#5cb860]">www.xz7.com</span>
      </div>
    </div>
  )
}

export default function App() {
  return (
    <div className="relative flex h-screen flex-col overflow-hidden bg-[#ece4e1] bg-[radial-gradient(ellipse_480px_560px_at_80px_100px,#e4e5dc_10%,transparent),radial-gradient(ellipse_420px_440px_at_1470px_60px,#e3e4e2_15%,transparent),linear-gradient(160deg,#eee6e2_40%,#ebe2e0)] font-['Open_Sans','Noto_Sans_CJK_SC',sans-serif] text-[12px]/[18px] text-[#2b2b2b]">
      <TitleBar />
      <MenuBar />
      <Ribbon />
      <main className="flex min-h-0 flex-1">
        <VRuler />
        <div className="flex min-w-0 flex-1 flex-col items-center overflow-hidden">
          <HRuler />
          <Page />
        </div>
        <ScrollBar />
        <StylesPane />
        <SideRail />
      </main>
      <StatusBar />
      <Watermark />
    </div>
  )
}
